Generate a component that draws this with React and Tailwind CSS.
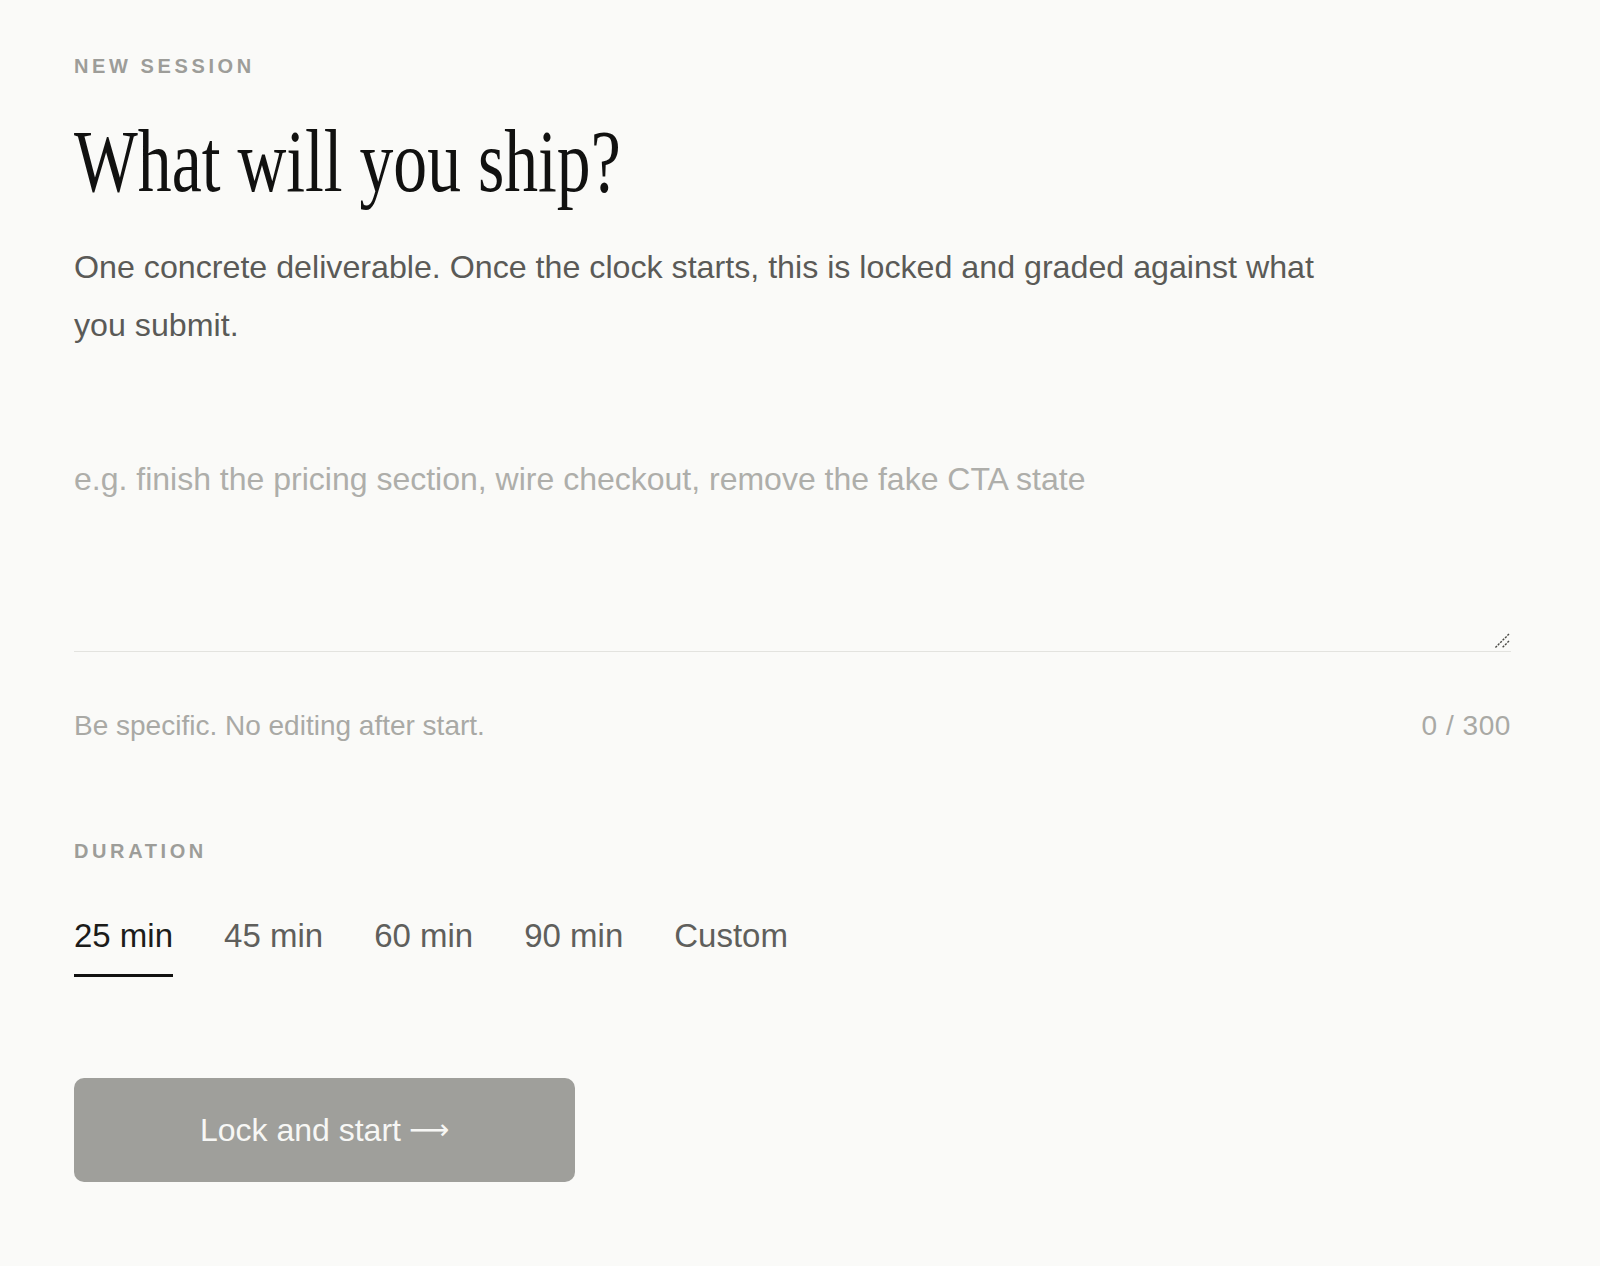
import { useState } from "react";

const durations = ["25 min", "45 min", "60 min", "90 min", "Custom"];

export default function App() {
  const [goal, setGoal] = useState("");
  const [duration, setDuration] = useState("25 min");

  return (
    <div className="min-h-screen bg-[#fafaf8] pl-[74px] pr-[89px] pt-[55px] font-['Liberation_Sans',Arial,sans-serif]">
      <p className="text-[20px] font-semibold uppercase leading-[23px] tracking-[0.18em] text-[#9d9d99]">
        New session
      </p>

      <h1 className="mt-[39px] font-['Liberation_Serif','Times_New_Roman',serif] text-[89px] font-normal leading-[89px] text-[#111110]">
        <span className="inline-block origin-left scale-x-[0.76]">What will you ship?</span>
      </h1>

      <p className="mt-[32px] max-w-[1280px] text-[32.2px] leading-[58px] text-[#5a5a57]">
        One concrete deliverable. Once the clock starts, this is locked and graded against what you submit.
      </p>

      <div className="relative mt-[77px]">
        <textarea
          value={goal}
          onChange={(e) => setGoal(e.target.value.slice(0, 300))}
          placeholder="e.g. finish the pricing section, wire checkout, remove the fake CTA state"
          className="block h-[221px] w-full resize-none border-0 border-b border-[#e3e3df] bg-transparent py-6 text-[32px] leading-[48px] text-[#222220] outline-none placeholder:text-[#aeaeaa]"
        />
        {/* resize grip */}
        <svg className="pointer-events-none absolute bottom-[3px] right-[1px] h-[18px] w-[18px]" viewBox="0 0 18 18">
          <path d="M17 3 L3 17 M17 10 L10 17" stroke="#4a4a45" strokeWidth="1.4" strokeDasharray="2.2 1.2" fill="none" />
        </svg>
      </div>

      <div className="mt-[58px] flex items-center justify-between text-[28px] leading-[32px] text-[#a9a9a5]">
        <span>Be specific. No editing after start.</span>
        <span className="tracking-[0.02em]">{goal.length} / 300</span>
      </div>

      <p className="mt-[98px] text-[20px] font-semibold uppercase leading-[23px] tracking-[0.18em] text-[#9d9d99]">
        Duration
      </p>

      <div className="mt-[54px] flex gap-[51px]">
        {durations.map((d) => (
          <button
            key={d}
            onClick={() => setDuration(d)}
            className={
              d === duration
                ? "border-b-[3px] border-[#111110] pb-[20px] text-[33px] leading-[37px] text-[#1c1c1a]"
                : "border-b-[3px] border-transparent pb-[20px] text-[33px] leading-[37px] text-[#5f5f5c]"
            }
          >
            {d}
          </button>
        ))}
      </div>

      <button
        disabled={goal.trim().length === 0}
        className="mt-[101px] flex h-[104px] w-[501px] items-center justify-center gap-[8px] rounded-[10px] bg-[#9f9f9b] text-[32px] text-[#f7f7f5]"
      >
        <span>Lock and start</span>
        <span className="font-['DejaVu_Sans',sans-serif] text-[28px]">⟶</span>
      </button>
    </div>
  );
}
